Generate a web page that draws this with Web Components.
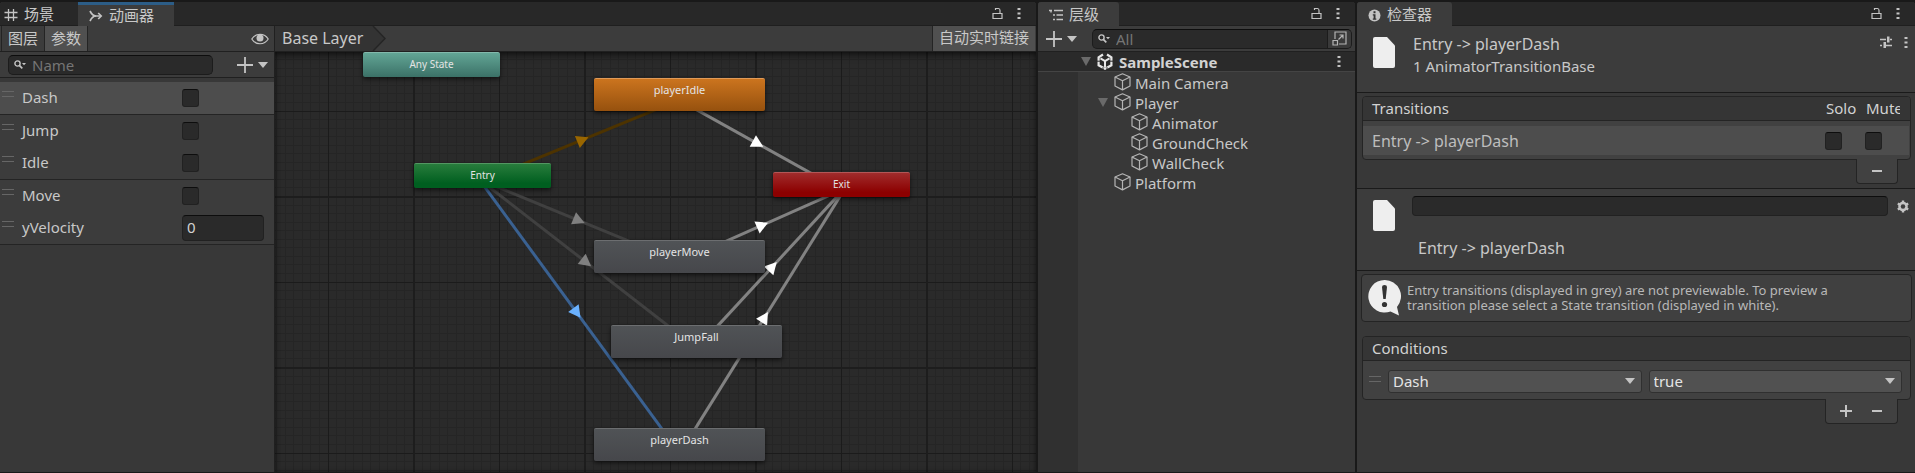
<!DOCTYPE html>
<html lang="zh-CN">
<head>
<meta charset="utf-8">
<title>Animator</title>
<style>
  body {
    margin: 0;
    background: #191919;
    color: #c8c8c8;
    font: 15px/20px "Noto Sans", "Noto Sans CJK SC", sans-serif;
  }
</style>
</head>
<body>
<editor-window></editor-window>

<script>
const BASE = `
  * { box-sizing: border-box; }
  :host { box-sizing: border-box; }
  :host([hidden]) { display: none; }
  button, input, select { font: inherit; color: inherit; margin: 0; padding: 0; border: 0; background: none; outline: 0; }
  button { display: flex; align-items: center; justify-content: center; white-space: nowrap; }
  input[type=checkbox] {
    appearance: none; flex: none; width: 17px; height: 18px;
    background: #2a2a2a; border: 1px solid #212121; border-top-color: #0d0d0d; border-radius: 3px;
  }
`;

function define(name, css, html, setup) {
  const template = document.createElement('template');
  template.innerHTML = `<style>${BASE}${css}</style>${html}`;
  customElements.define(name, class extends HTMLElement {
    constructor() {
      super();
      this.attachShadow({ mode: 'open' }).append(template.content.cloneNode(true));
    }
    connectedCallback() { if (setup) setup(this, this.shadowRoot); }
  });
}

/* ---------- icons ---------- */
const CUBE = '<g fill="none" stroke="#b4b4b4" stroke-width="1.2" stroke-linejoin="round"><path d="M8.5 .8 16 4v9L8.500 16.900 1 13V4Z"/><path d="M1 4l7.500 3.800L16 4M8.500 7.800v9"/></g>';
const ICONS = {
  grid: [14, 14, '<path d="M4.500 1v12M9.500 1v12M.500 4.500h13M.500 9.500h13" stroke="#c4c4c4" stroke-width="1.300" fill="none"/>'],
  animator: [14, 12, '<g fill="none" stroke="#c4c4c4" stroke-width="1.700"><path d="M1 1c1.500 3 3 5 6 5h5"/><path d="M1 11c1.500-3 3-5 6-5"/><path d="M9.200 3l3 3-3 3"/></g>'],
  hierarchy: [14, 12, '<path d="M0 1.500h3M5 1.500h9M4 6h2M7.500 6H14M4 10.500h2M7.500 10.500H14M2 1.500v2" stroke="#c4c4c4" stroke-width="1.400" fill="none"/>'],
  info: [13, 13, '<circle cx="6.500" cy="6.500" r="6" fill="#c4c4c4"/><path d="M5.500 2.200h2v2h-2zM4.800 5.300h2.700V9.500h.800v1.200H4.800V9.500h.800v-3h-.800z" fill="#333"/>'],
  lock: [11, 13, '<path d="M1 6.500h9v5H1zM3.500 3V1.500h3q1.500 0 1.500 2v3" fill="none" stroke="#c4c4c4" stroke-width="1.200"/>'],
  kebab: [4, 13, '<path d="M.500 1h3v2h-3zM.500 5.500h3v2h-3zM.500 10h3v2h-3z" fill="#c4c4c4"/>'],
  eye: [18, 12, '<path d="M.800 6C4.500-.300 13.500-.300 17.200 6 13.500 12.300 4.500 12.300.800 6Z" fill="none" stroke="#c4c4c4" stroke-width="1.200"/><circle cx="9" cy="5" r="3.500" fill="#c4c4c4"/>'],
  search: [12, 9, '<circle cx="3.500" cy="3.500" r="2.600" fill="none" stroke="#c4c4c4" stroke-width="1.400"/><path d="M5.300 5.300 8.300 8.300" stroke="#c4c4c4" stroke-width="1.700"/><path d="M8 3h4L10 5.300Z" fill="#c4c4c4"/>'],
  add: [16, 16, '<path d="M8 0v16M0 8h16" stroke="#c4c4c4" stroke-width="1.800"/>'],
  down: [10, 6, '<path d="M0 0h10L5 6Z" fill="#c4c4c4"/>'],
  fold: [10, 9, '<path d="M0 0h10L5 9Z" fill="#6a6a6a"/>'],
  cube: [17, 18, CUBE],
  unity: [16, 17, '<g fill="none" stroke="#e8e8e8"><path d="M6 1.500 1.600 4.300v8L8 15.800l6.400-3.500v-8L10 1.500" stroke-width="2.200"/><path d="M3.500 5.300 8 8l4.500-2.700M8 8v6" stroke-width="2"/></g><path d="M0 8.200h3M13 8.200h3M6 14.200v3M10 14.200v3" stroke="#2a2a2a" stroke-width="1"/>'],
  pop: [15, 15, '<g fill="none" stroke="#b4b4b4" stroke-width="1.200"><path d="M3 8V1h11v12H7"/><path d="M1 9.500h4.500V14H1z"/><path d="M6.500 8.500 11 4M7.500 4H11v3.500"/></g>'],
  file: [22, 31, '<path d="M2 0H14l8 8.500V29a2 2 0 0 1-2 2H2a2 2 0 0 1-2-2V2A2 2 0 0 1 2 0Z" fill="#eee"/>'],
  preset: [12, 12, '<path d="M0 3.500h6M10 3.500h2M0 9.500h2M6 9.500h6" stroke="#c4c4c4" stroke-width="1.300"/><path d="M7 .500h2.500v6H7zM3.500 6h2.500v6H3.500z" fill="#c4c4c4"/>'],
  gear: [12, 13, '<circle cx="6" cy="6.500" r="3.500" fill="none" stroke="#c4c4c4" stroke-width="2.600"/><path d="M6 .500v12M.800 3.500l10.400 6M.800 9.500l10.400-6" stroke="#c4c4c4" stroke-width="2.400"/><circle cx="6" cy="6.500" r="2.200" fill="#3c3c3c"/>'],
  minus: [10, 2, '<path d="M0 0h10v2H0z" fill="#c4c4c4"/>'],
  plus: [12, 12, '<path d="M6 0v12M0 6h12" stroke="#c4c4c4" stroke-width="2"/>'],
  grip: [12, 6, '<path d="M0 .500h12M0 5.500h12" stroke="#666"/>'],
  alert: [33, 36, '<path d="M16.500 0a16.300 16.300 0 1 0 6 31.500L31 35.500 29 27A16.300 16.300 0 0 0 16.500 0Z" fill="#eee"/><path d="M14 7q0-2 2.500-2T19 7l-1.300 12h-2.400Z" fill="#333"/><circle cx="16.500" cy="24.500" r="2.600" fill="#333"/>'],
};
customElements.define('ed-icon', class extends HTMLElement {
  static observedAttributes = ['name'];
  constructor() { super(); this.attachShadow({ mode: 'open' }); }
  attributeChangedCallback() {
    const [w, h, art] = ICONS[this.getAttribute('name')];
    this.shadowRoot.innerHTML = `<style>:host{display:block;flex:none}svg{display:block}</style><svg width="${w}" height="${h}" viewBox="0 0 ${w} ${h}" aria-hidden="true">${art}</svg>`;
  }
});

/* ---------- panel frame ---------- */
define('ed-panel', `
  :host { display: flex; flex-direction: column; min-width: 0; background: #383838; border-radius: 3px 3px 0 0; }
  header { display: flex; height: 24px; flex: none; background: #282828; border-bottom: 1px solid #1f1f1f; border-radius: 3px 3px 0 0; }
  .tools { margin-left: auto; display: flex; align-items: center; gap: 14px; padding-right: 15px; }
`, `<header><slot name="tab"></slot><div class="tools"><button aria-label="Lock"><ed-icon name="lock"></ed-icon></button><button aria-label="Menu"><ed-icon name="kebab"></ed-icon></button></div></header><slot></slot>`);

define('ed-tab', `
  :host { display: block; height: 24px; }
  button { height: 24px; gap: 6px; padding: 0 20px 0 4px; }
  ed-icon { margin-top: 2px; }
  :host([active]) button { background: #3c3c3c; padding-left: 11px; border-radius: 3px 3px 0 0; }
  :host([focused]) { margin-left: 4px; }
  :host([focused]) button { border-top: 3px solid #2c5d87; padding-bottom: 2px; border-radius: 0; }
`, `<button role="tab"><ed-icon></ed-icon><slot></slot></button>`, (el, root) => {
  root.querySelector('ed-icon').setAttribute('name', el.getAttribute('icon'));
});

define('ed-search', `
  :host { display: flex; align-items: center; height: 20px; background: #2a2a2a; border: 1px solid #1c1c1c; border-top-color: #0d0d0d; border-radius: 5px; padding-left: 5px; gap: 6px; overflow: hidden; }
  input { flex: 1; min-width: 0; height: 18px; }
  input::placeholder { color: #757575; opacity: 1; }
`, `<ed-icon name="search"></ed-icon><input type="text"><slot></slot>`, (el, root) => {
  const input = root.querySelector('input');
  input.placeholder = el.getAttribute('placeholder');
  input.setAttribute('aria-label', 'Search ' + input.placeholder);
});

define('ed-select', `
  :host { display: grid; flex: 1; min-width: 0; height: 23px; align-items: center; }
  select { grid-area: 1/1; appearance: none; width: 100%; height: 23px; padding: 0 24px 3px 4px; background: #515151; border: 1px solid #303030; border-radius: 3px; color: #e4e4e4; }
  ed-icon { grid-area: 1/1; justify-self: end; margin-right: 7px; pointer-events: none; }
`, `<select><option></option></select><ed-icon name="down"></ed-icon>`, (el, root) => {
  root.querySelector('option').textContent = el.getAttribute('value');
  root.querySelector('select').setAttribute('aria-label', el.getAttribute('label'));
});

/* ---------- animator: parameters ---------- */
define('param-row', `
  :host { display: flex; align-items: center; height: 32px; background: #3c3c3c; padding: 0 10px 0 2px; }
  :host([lined]) { height: 33px; border-bottom: 1px solid #242424; }
  :host([selected]) { background: #4d4d4d; }
  ed-icon { margin: 0 8px 8px 0; }
  label { flex: 1; min-width: 0; padding-bottom: 2px; }
  .value { width: 82px; display: flex; }
  input[type=text] { width: 82px; height: 26px; padding: 0 4px 3px; background: #2a2a2a; border: 1px solid #212121; border-top-color: #0d0d0d; border-radius: 4px; color: #d2d2d2; }
`, `<ed-icon name="grip"></ed-icon><label for="v"></label><span class="value"></span>`, (el, root) => {
  root.querySelector('label').textContent = el.getAttribute('name');
  root.querySelector('.value').innerHTML = el.hasAttribute('value')
    ? `<input id="v" type="text" value="${el.getAttribute('value')}">` : '<input id="v" type="checkbox">';
});

define('param-list', `
  :host { display: flex; flex-direction: column; border-right: 1px solid #202020; background: #383838; }
  .bar { display: flex; align-items: center; height: 26px; border-bottom: 1px solid #202020; background: #3c3c3c; }
  .views { padding: 0 5px 0 1px; }
  .views button { height: 25px; padding: 0 6px 2px; border: solid #242424; border-width: 0 1px; margin-right: -1px; }
  .views .on { background: #505050; }
  .views .eye { margin: 0 0 0 auto; border: 0; padding: 0; }
  .find { padding: 0 6px 0 8px; }
  ed-search { flex: 1; }
  .add { margin-left: 24px; gap: 5px; }
  .rows { padding-top: 4px; }
`, `
  <div class="bar views"><button>图层</button><button class="on">参数</button><button class="eye" aria-label="Visibility"><ed-icon name="eye"></ed-icon></button></div>
  <div class="bar find"><ed-search placeholder="Name"></ed-search><button class="add" aria-label="Add parameter"><ed-icon name="add"></ed-icon><ed-icon name="down"></ed-icon></button></div>
  <div class="rows">
    <param-row name="Dash" selected lined></param-row><param-row name="Jump"></param-row><param-row name="Idle" lined></param-row>
    <param-row name="Move"></param-row><param-row name="yVelocity" value="0" lined></param-row>
  </div>`);

/* ---------- animator: state graph ---------- */
define('state-node', `
  :host {
    position: absolute; width: 171px; height: 33px; padding-top: 3px; text-align: center; border-radius: 2px;
    font-size: 11px; line-height: 16px; color: #e4e4e4;
    background: linear-gradient(#505356, #46474b); border-top: 1px solid #6c6e70; box-shadow: 0 2px 4px #0009;
  }
  :host([kind]) { width: 137px; height: 25px; font-size: 10px; }
  :host([kind=any]) { background: linear-gradient(#62a595, #3b7167); border-color: #83b9ac; }
  :host([kind=entry]) { background: linear-gradient(#287c3c, #005f20 80%); border-color: #539662; }
  :host([kind=exit]) { background: linear-gradient(#a02c2c, #8c0000 80%); border-color: #b35656; }
  :host([default]) { background: linear-gradient(#cb741e, #96510e); border-color: #e09a58; }
`, `<slot></slot>`, (el) => {
  el.style.left = el.getAttribute('x') + 'px';
  el.style.top = el.getAttribute('y') + 'px';
});

define('state-graph', `
  :host { display: block; position: relative; flex: 1; min-width: 0; overflow: hidden; background: #2a2a2a; }
  svg { position: absolute; inset: 0; width: 100%; height: 100%; }
  .shade { position: absolute; inset: 0; box-shadow: inset 0 6px 8px -4px #0009, inset 0 0 5px #0006; pointer-events: none; }
`, `
  <svg aria-hidden="true"><defs><pattern id="grid" x="-33" y="-27" width="171" height="171" patternUnits="userSpaceOnUse"></pattern></defs>
  <rect width="100%" height="100%" fill="url(#grid)"></rect><g id="edges"></g></svg>
  <div class="shade"></div>
  <state-node kind="any" x="88" y="0">Any State</state-node>
  <state-node default x="319" y="26">playerIdle</state-node>
  <state-node kind="entry" x="139" y="111">Entry</state-node>
  <state-node kind="exit" x="498" y="120">Exit</state-node>
  <state-node x="319" y="188">playerMove</state-node>
  <state-node x="336" y="273">JumpFall</state-node>
  <state-node x="319" y="376">playerDash</state-node>`,
(el, root) => {
  let minor = '';
  for (let i = 0; i < 20; i++) {
    if (i % 10 === 0) continue;
    const p = Math.round(i * 8.55) + 0.5;
    minor += `M${p} 0V171M0 ${p}H171`;
  }
  root.querySelector('#grid').innerHTML =
    `<path d="${minor}" stroke="#252525"/><path d="M86.5 0V171M0 86.5H171" stroke="#1b1b1b"/><path d="M0 0h2v171H0zM0 0h171v2H0z" fill="#1d1d1d"/>`;
  const at = { entry: [207.5, 123.5], idle: [404.5, 42.5], exit: [566.5, 132.5], move: [404.5, 204.5], fall: [421.5, 289.5], dash: [404.5, 392.5] };
  const edges = [
    ['entry', 'idle', '#4d3300', '#996600'], ['entry', 'move', '#404040', '#808080'], ['entry', 'fall', '#404040', '#808080'],
    ['entry', 'dash', '#3a6191', '#6bb2ff'], ['idle', 'exit', '#828282', '#fff'], ['move', 'exit', '#828282', '#fff'],
    ['fall', 'exit', '#828282', '#fff'], ['dash', 'exit', '#828282', '#fff'],
  ];
  /* Each edge runs beside the centre line, on the right of its direction of travel. */
  root.querySelector('#edges').innerHTML = edges.map(([from, to, line, head]) => {
    const [ax, ay] = at[from], [bx, by] = at[to];
    const len = Math.hypot(bx - ax, by - ay), ux = (bx - ax) / len, uy = (by - ay) / len;
    const ox = -uy * 5, oy = ux * 5;
    const mx = (ax + bx) / 2 + ox - ux, my = (ay + by) / 2 + oy - uy;
    const pt = (f, s) => `${mx + ux * f - uy * s},${my + uy * f + ux * s}`;
    return `<path d="M${ax + ox} ${ay + oy}L${bx + ox} ${by + oy}" stroke="${line}" stroke-width="3"/>` +
      `<polygon points="${pt(7, 0)} ${pt(-5, 6.5)} ${pt(-5, -6.5)}" fill="${head}"/>`;
  }).join('');
});

define('animator-body', `
  :host { display: grid; grid-template-columns: 275px minmax(0, 1fr); flex: 1; }
  main { display: flex; flex-direction: column; }
  nav { display: flex; height: 26px; background: #3c3c3c; border-bottom: 1px solid #202020; font-size: 16px; line-height: 25px; }
  .crumb { display: flex; background: #333; padding-left: 7px; }
  .crumb svg { display: block; background: #3c3c3c; margin-left: 7px; }
  .live { margin-left: auto; margin-right: 1px; height: 25px; padding: 0 6px 2px; font-size: 15px; background: #505050; border-left: 1px solid #242424; }
`, `
  <param-list></param-list>
  <main><nav><div class="crumb">Base Layer<svg width="16" height="25" viewBox="0 0 16 25" aria-hidden="true"><path d="M0 0h3L15 12.500 3 25H0z" fill="#333"/><path d="M3 0 15 12.500 3 25" fill="none" stroke="#252525" stroke-width="1.500"/></svg></div><button class="live">自动实时链接</button></nav>
  <state-graph></state-graph></main>`);

/* ---------- hierarchy ---------- */
define('tree-item', `
  :host { display: flex; align-items: center; height: 20px; padding-left: 36px; gap: 4px; }
  :host([deep]) { padding-left: 53px; }
  :host([open]) { padding-left: 20px; }
  .fold { display: none; margin-right: 2px; }
  :host([open]) .fold { display: flex; }
  span { padding-top: 2px; }
`, `<button class="fold" aria-label="Collapse"><ed-icon name="fold"></ed-icon></button><ed-icon name="cube"></ed-icon><span><slot></slot></span>`);

define('hierarchy-body', `
  :host { display: flex; flex-direction: column; flex: 1; }
  .bar { display: flex; align-items: center; height: 26px; padding: 0 3px 0 8px; background: #3c3c3c; border-bottom: 1px solid #202020; }
  .add { gap: 5px; margin-right: 15px; }
  ed-search { flex: 1; }
  .pop { height: 20px; padding: 0 4px; border-left: 1px solid #1c1c1c; background: #3a3a3a; }
  .scene { display: flex; align-items: center; height: 20px; padding: 0 14px 0 43px; background: #2a2a2a; border-bottom: 1px solid #444; font-weight: 700; color: #d2d2d2; }
  .scene ed-icon { margin-right: 6px; }
  .scene .menu { margin-left: auto; }
  .scene .menu ed-icon { margin: 0; }
  .tree { flex: 1; border-left: 40px solid #303030; }
`, `
  <div class="bar"><button class="add" aria-label="Create"><ed-icon name="add"></ed-icon><ed-icon name="down"></ed-icon></button><ed-search placeholder="All"><button class="pop" aria-label="Open search"><ed-icon name="pop"></ed-icon></button></ed-search></div>
  <div class="scene"><ed-icon name="fold"></ed-icon><ed-icon name="unity"></ed-icon>SampleScene<button class="menu" aria-label="Scene menu"><ed-icon name="kebab"></ed-icon></button></div>
  <div class="tree"><tree-item>Main Camera</tree-item><tree-item open>Player</tree-item><tree-item deep>Animator</tree-item><tree-item deep>GroundCheck</tree-item><tree-item deep>WallCheck</tree-item><tree-item>Platform</tree-item></div>`);

/* ---------- inspector ---------- */
define('list-box', `
  :host { display: block; }
  .box { background: #414141; border: 1px solid #242424; border-radius: 4px; }
  header { display: flex; height: 24px; line-height: 23px; padding: 0 10px 0 9px; background: #353535; border-bottom: 1px solid #242424; border-radius: 3px 3px 0 0; color: #d2d2d2; }
  footer { position: relative; display: flex; justify-content: space-around; width: max-content; height: 25px; margin: -1px 13px 0 auto; background: #414141; border: 1px solid #242424; border-top: 0; border-radius: 0 0 4px 4px; padding: 0 9px; gap: 9px; }
  ::slotted(button) { width: 22px; }
`, `<div class="box"><header><slot name="head"></slot></header><slot></slot></div><footer><slot name="foot"></slot></footer>`);

define('help-box', `
  :host { display: flex; align-items: center; gap: 6px; height: 48px; padding: 0 8px 0 6px; background: #404040; border: 1px solid #242424; border-radius: 4px; font-size: 13px; line-height: 15px; color: #b8b8b8; }
  p { margin: 0; max-width: 450px; }
`, `<ed-icon name="alert"></ed-icon><p><slot></slot></p>`);

define('inspector-body', `
  :host { display: flex; flex-direction: column; flex: 1; }
  section { display: flex; background: #3c3c3c; border-bottom: 1px solid #1a1a1a; padding-left: 16px; }
  .big { font-size: 16px; }
  .top { height: 67px; padding-top: 7px; line-height: 22px; }
  .top ed-icon[name=file] { margin: 4px 18px 0 0; }
  .acts { margin-left: auto; display: flex; align-items: flex-start; gap: 12px; padding: 3px 7px 0 0; }
  list-box { margin: 3px 4px 0 5px; }
  .cols { margin-left: auto; display: flex; }
  .cols span { width: 40px; }
  .cols span + span { width: 34px; overflow: hidden; }
  .item { display: flex; align-items: center; height: 29px; margin: 5px 1px 4px 0; padding: 0 27px 0 9px; background: #4d4d4d; gap: 23px; color: #bdbdbd; }
  .item span { flex: 1; }
  .name { margin-top: 4px; border-top: 1px solid #1a1a1a; height: 83px; padding: 7px 6px 0 16px; }
  .name ed-icon[name=file] { margin: 4px 17px 0 0; }
  .name .col { flex: 1; }
  .name .line { display: flex; align-items: center; gap: 9px; }
  .name input { flex: 1; min-width: 0; height: 20px; background: #2a2a2a; border: 1px solid #212121; border-top-color: #0d0d0d; border-radius: 4px; padding: 0 4px; }
  .name p { margin: 22px 0 0 6px; }
  help-box { margin: 3px 3px 0 4px; }
  .conds { margin-top: 14px; }
  .cond { display: flex; align-items: center; height: 38px; padding: 2px 8px 0 6px; gap: 7px; }
  .cond ed-icon { margin-bottom: 4px; }
`, `
  <section class="top"><ed-icon name="file"></ed-icon><div><div class="big">Entry -&gt; playerDash</div><div>1 AnimatorTransitionBase</div></div>
    <div class="acts"><button aria-label="Presets"><ed-icon name="preset"></ed-icon></button><button aria-label="Menu"><ed-icon name="kebab"></ed-icon></button></div></section>
  <list-box><span slot="head">Transitions</span><div slot="head" class="cols"><span>Solo</span><span>Mute</span></div>
    <div class="item"><span class="big">Entry -&gt; playerDash</span><input type="checkbox" aria-label="Solo"><input type="checkbox" aria-label="Mute"></div>
    <button slot="foot" aria-label="Remove transition"><ed-icon name="minus"></ed-icon></button></list-box>
  <section class="name"><ed-icon name="file"></ed-icon><div class="col"><div class="line"><input type="text" aria-label="Name"><button aria-label="Settings"><ed-icon name="gear"></ed-icon></button></div><p class="big">Entry -&gt; playerDash</p></div></section>
  <help-box>Entry transitions (displayed in grey) are not previewable. To preview a transition please select a State transition (displayed in white).</help-box>
  <list-box class="conds"><span slot="head">Conditions</span>
    <div class="cond"><ed-icon name="grip"></ed-icon><ed-select value="Dash" label="Parameter"></ed-select><ed-select value="true" label="Value"></ed-select></div>
    <button slot="foot" aria-label="Add condition"><ed-icon name="plus"></ed-icon></button><button slot="foot" aria-label="Remove condition"><ed-icon name="minus"></ed-icon></button></list-box>`);

define('editor-window', `
  :host { display: grid; grid-template-columns: 1036fr 317fr 558fr; gap: 2px; min-height: 100vh; padding: 2px 0 1px; }
`, `
  <ed-panel><ed-tab slot="tab" icon="grid">场景</ed-tab><ed-tab slot="tab" icon="animator" active focused>动画器</ed-tab><animator-body></animator-body></ed-panel>
  <ed-panel><ed-tab slot="tab" icon="hierarchy" active>层级</ed-tab><hierarchy-body></hierarchy-body></ed-panel>
  <ed-panel><ed-tab slot="tab" icon="info" active>检查器</ed-tab><inspector-body></inspector-body></ed-panel>`);
</script>
</body>
</html>
